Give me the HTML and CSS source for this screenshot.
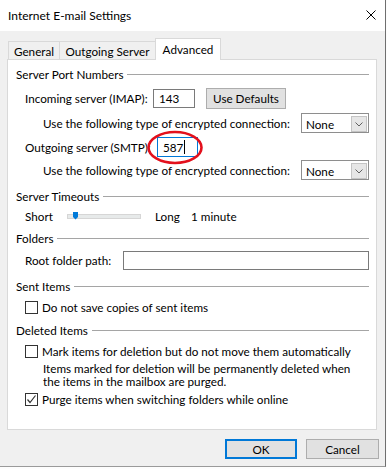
FILE: index.html
```html
<!DOCTYPE html>
<html lang="en">
<head>
  <meta charset="UTF-8">
  <title>Internet E-mail Settings</title>
  <link rel="stylesheet" href="styles.css">
</head>
<body>
  <div class="dialog">
    <div class="titlebar">
      <span class="title">Internet E-mail Settings</span>
      <svg class="close" width="10" height="10" viewBox="0 0 10 10">
        <path d="M0.5 0.5 L9.5 9.5 M9.5 0.5 L0.5 9.5" stroke="#000" stroke-width="1" fill="none"/>
      </svg>
    </div>

    <div class="dialog-body">
      <div class="tabs">
        <div class="tab tab-general">General</div>
        <div class="tab tab-outgoing">Outgoing Server</div>
        <div class="tab tab-active">Advanced</div>
      </div>

      <div class="panel">
        <div class="group-title gt-ports">Server Port Numbers</div>

        <div class="row indent1 row-imap">
          <span class="lbl lbl-imap">Incoming server (IMAP):</span>
          <div class="textbox tb-imap">143</div>
          <div class="button btn-defaults">Use Defaults</div>
        </div>

        <div class="row indent2 row-enc1">
          <span class="lbl lbl-enc">Use the following type of encrypted connection:</span>
          <div class="select">
            <span class="select-value">None</span>
            <span class="select-arrow">
              <svg width="8" height="5" viewBox="0 0 8 5"><path d="M0.5 0.5 L4 4 L7.5 0.5" stroke="#606060" fill="none"/></svg>
            </span>
          </div>
        </div>

        <div class="row indent1 row-smtp">
          <span class="lbl lbl-smtp">Outgoing server (SMTP):</span>
          <div class="textbox tb-smtp">587<span class="caret"></span></div>
          <svg class="annotation" width="58" height="36" viewBox="0 0 58 36">
            <ellipse cx="29" cy="17.5" rx="26.5" ry="15.5" stroke="#e3101c" stroke-width="2.6" fill="none"/>
          </svg>
        </div>

        <div class="row indent2 row-enc2">
          <span class="lbl lbl-enc">Use the following type of encrypted connection:</span>
          <div class="select">
            <span class="select-value">None</span>
            <span class="select-arrow">
              <svg width="8" height="5" viewBox="0 0 8 5"><path d="M0.5 0.5 L4 4 L7.5 0.5" stroke="#606060" fill="none"/></svg>
            </span>
          </div>
        </div>

        <div class="group-title gt-timeouts">Server Timeouts</div>

        <div class="row-slim indent1 row-slider">
          <span class="lbl lbl-short">Short</span>
          <div class="slider">
            <div class="slider-thumb"></div>
          </div>
          <span class="lbl lbl-long">Long</span>
          <span class="lbl">1 minute</span>
        </div>

        <div class="group-title gt-folders">Folders</div>

        <div class="row indent1 row-root">
          <span class="lbl lbl-root">Root folder path:</span>
          <div class="textbox tb-root"></div>
        </div>

        <div class="group-title gt-sent">Sent Items</div>

        <div class="row-slim indent1 row-cb1">
          <span class="check"></span>
          <span class="lbl">Do not save copies of sent items</span>
        </div>

        <div class="group-title gt-deleted">Deleted Items</div>

        <div class="row-slim indent1 row-cb2">
          <span class="check"></span>
          <span class="lbl">Mark items for deletion but do not move them automatically</span>
        </div>

        <p class="note">Items marked for deletion will be permanently deleted when<br>the items in the mailbox are purged.</p>

        <div class="row-slim indent1 row-cb3">
          <span class="check">
            <svg width="11" height="11" viewBox="0 0 11 11"><path d="M1.5 5.5 L4 8.5 L9.5 1.5" stroke="#333" stroke-width="1.2" fill="none"/></svg>
          </span>
          <span class="lbl">Purge items when switching folders while online</span>
        </div>
      </div>
    </div>

    <div class="footer">
      <div class="button btn-ok">OK</div>
      <div class="button btn-cancel">Cancel</div>
    </div>
  </div>
</body>
</html>
```

FILE: styles.css
```css
* {
  margin: 0;
  padding: 0;
  box-sizing: border-box;
}

body {
  font-family: "Segoe UI", Lato, "Noto Sans", sans-serif;
  font-size: 11.7px;
  color: #000;
  background: #fdfdfd;
}

.dialog {
  width: 386px;
  height: 467px;
  background: #f0f0f0;
  border-right: 1px solid #6f6f6f;
  border-bottom: 1px solid #9a9a9a;
}

/* title bar */
.titlebar {
  height: 31px;
  background: #fff;
  display: flex;
  align-items: center;
  justify-content: space-between;
  padding: 0 9px 1px 8px;
}

.title {
  font-size: 12px;
}

.close {
  display: block;
}

/* tabs + page */
.dialog-body {
  padding: 7px 8px 0 7px;
}

.tabs {
  display: flex;
  align-items: flex-end;
  height: 21px;
  padding-left: 1px;
  position: relative;
  z-index: 1;
}

.tab {
  height: 18px;
  border: 1px solid #d9d9d9;
  border-bottom: none;
  margin-right: -1px;
  display: flex;
  align-items: center;
  justify-content: center;
  background: #f0f0f0;
}

.tab-general {
  width: 52px;
}

.tab-outgoing {
  width: 97px;
}

.tab-active {
  width: 66px;
  height: 22px;
  margin-bottom: -1px;
  background: #fff;
  padding-bottom: 2px;
}

.panel {
  height: 371px;
  background: #fff;
  border: 1px solid #d9d9d9;
  padding: 6px 7px 0 8px;
}

/* group headings with rule */
.group-title {
  display: flex;
  align-items: center;
  height: 16px;
  white-space: nowrap;
}

.group-title::after {
  content: "";
  flex: 1;
  height: 1px;
  margin-left: 4px;
  background: #a5a5a5;
}

.gt-timeouts { margin-top: 7px; }
.gt-folders { margin-top: 6px; }
.gt-sent { margin-top: 7px; }
.gt-deleted { margin-top: 7px; }

/* rows */
.row {
  display: flex;
  align-items: center;
  height: 22px;
  position: relative;
}

.row-slim {
  display: flex;
  align-items: center;
  height: 16px;
}

.indent1 { padding-left: 9px; }
.indent2 { padding-left: 27px; }

.row-imap { margin-top: 5px; }
.row-enc1 { margin-top: 3px; }
.row-smtp { margin-top: 2px; }
.row-enc2 { margin-top: 1px; }
.row-slider { margin-top: 4px; }
.row-root { margin-top: 3px; }
.row-cb1 { margin-top: 5px; }
.row-cb2 { margin-top: 5px; }
.row-cb3 { margin-top: 3px; }

.lbl {
  white-space: nowrap;
  flex-shrink: 0;
}

.lbl-imap { width: 128px; }
.lbl-smtp { width: 132px; }
.lbl-enc { width: 258px; }
.lbl-root { width: 98px; }
.lbl-short { width: 42px; }
.lbl-long { width: 36px; margin-left: 14px; }

/* controls */
.textbox {
  height: 19px;
  border: 1px solid #7a7a7a;
  background: #fff;
  padding-left: 5px;
  display: flex;
  align-items: center;
}

.tb-imap { width: 42px; }

.tb-smtp {
  width: 41px;
  height: 20px;
  border-color: #0078d7;
}

.tb-root { flex: 1; }

.caret {
  width: 1px;
  height: 14px;
  background: #000;
  margin-left: 1px;
}

.annotation {
  position: absolute;
  left: 130px;
  top: -6px;
}

.button {
  height: 21px;
  background: #e1e1e1;
  border: 1px solid #adadad;
  display: flex;
  align-items: center;
  justify-content: center;
}

.btn-defaults {
  width: 80px;
  margin-left: 11px;
}

.select {
  width: 68px;
  height: 20px;
  border: 1px solid #8e8e8e;
  background: #fff;
  display: flex;
  align-items: center;
  justify-content: space-between;
  padding: 2px 1px 0 4px;
}

.select-arrow {
  width: 16px;
  height: 16px;
  background: #e6e6e6;
  border: 1px solid #c4c4c4;
  display: flex;
  align-items: center;
  justify-content: center;
}

.select-arrow svg {
  display: block;
}

/* slider */
.slider {
  width: 74px;
  height: 5px;
  background: #e7eaea;
  border: 1px solid #d6d6d6;
  position: relative;
}

.slider-thumb {
  position: absolute;
  left: 5px;
  top: -3px;
  width: 5px;
  height: 8px;
  background: #007ad9;
  clip-path: polygon(0 0, 100% 0, 100% 70%, 50% 100%, 0 70%);
}

/* checkboxes */
.check {
  width: 13px;
  height: 13px;
  border: 1px solid #333;
  background: #fff;
  margin-right: 4px;
  display: flex;
  align-items: center;
  justify-content: center;
  flex-shrink: 0;
}

.check svg {
  display: block;
}

.note {
  margin-top: 3px;
  padding-left: 27px;
  line-height: 13px;
}

/* bottom buttons */
.footer {
  display: flex;
  justify-content: flex-end;
  gap: 9px;
  padding: 9px 6px 0 0;
}

.btn-ok {
  width: 72px;
  height: 20px;
  border: 2px solid #0078d7;
}

.btn-cancel {
  width: 73px;
  height: 20px;
}
```
